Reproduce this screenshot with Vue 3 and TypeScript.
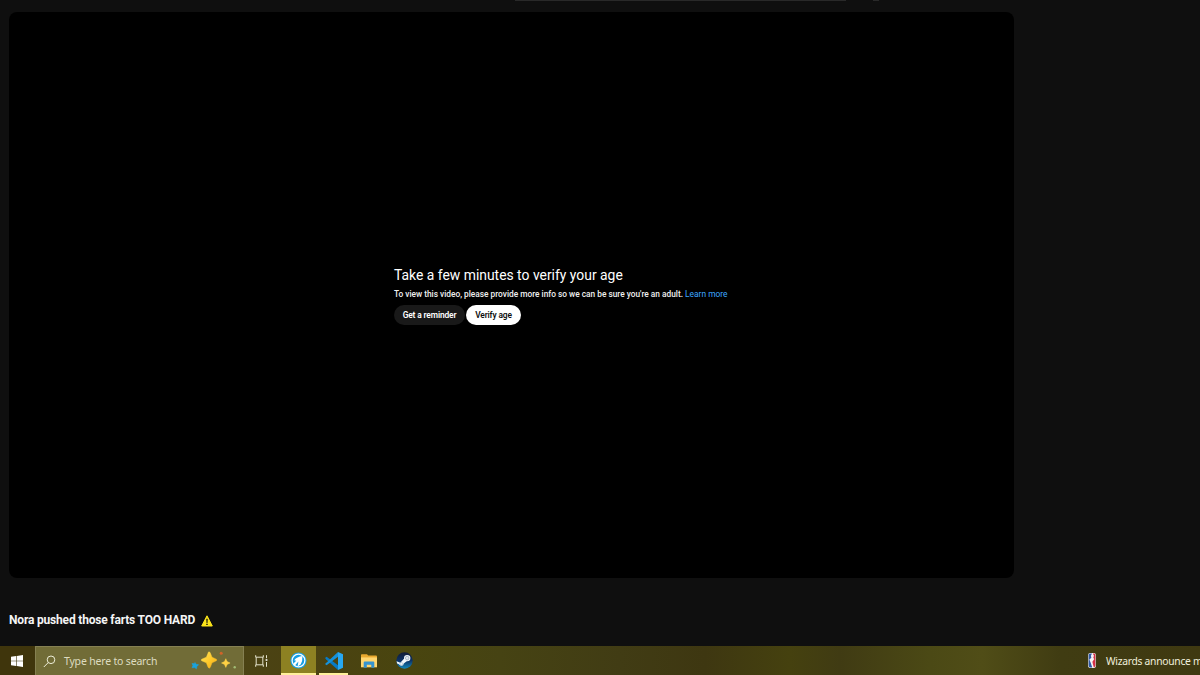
<script setup lang="ts">
const prompt = {
  title: 'Take a few minutes to verify your age',
  body: "To view this video, please provide more info so we can be sure you're an adult.",
}
const videoTitle = 'Nora pushed those farts TOO HARD'
</script>

<template>
  <div class="screen">
    <main class="page">
      <div class="masthead"><i class="search-edge"></i><i class="mic-edge"></i></div>
      <section class="player">
        <div class="prompt">
          <h1>{{ prompt.title }}</h1>
          <p>{{ prompt.body }} <a>Learn more</a></p>
          <div class="actions">
            <button class="dark">Get a reminder</button>
            <button class="light">Verify age</button>
          </div>
        </div>
      </section>
      <h2>
        <span>{{ videoTitle }}</span>
        <svg width="12" height="12" viewBox="0 0 12 12">
          <path d="M6 .8 11.3 11H.7Z" fill="#fde51b" stroke="#fde51b" stroke-width="1" stroke-linejoin="round" />
          <path d="M5.2 3.7h1.6L6.5 8h-1zM5.2 8.7h1.6v1.4H5.2z" fill="#25220b" />
        </svg>
      </h2>
    </main>
    <footer class="taskbar">
      <div class="start">
        <svg width="12" height="12" viewBox="0 0 12 12" fill="#fff">
          <path d="M0 1.7 5.2 1v4.7H0zM5.8.9 12 0v5.7H5.8zM0 6.3h5.2V11L0 10.3zM5.8 6.3H12V12l-6.2-.9z" />
        </svg>
      </div>
      <div class="search">
        <svg class="lens" width="13" height="13" viewBox="0 0 13 13" fill="none" stroke="#eeeed8" stroke-width="1">
          <circle cx="8" cy="4.8" r="3.8" /><path d="M5.3 7.5.8 12" />
        </svg>
        <span>Type here to search</span>
        <svg class="sparkles" width="48" height="22" viewBox="0 0 48 22">
          <defs>
            <linearGradient id="gold" x1="0" y1="0" x2="1" y2="1">
              <stop offset="0" stop-color="#ffe35c" /><stop offset=".55" stop-color="#ffc928" /><stop offset="1" stop-color="#f0a51a" />
            </linearGradient>
          </defs>
          <path d="M18.5 2Q19.5 1.4 20.3 3L22 7.2 26.3 9.2Q27.4 10 26.3 10.8L22 12.8 20.3 17.3Q19.2 19 18.1 17.3L16.4 12.8 11.7 10.8Q10.5 10 11.7 9.2L16.4 7.2Z" fill="url(#gold)" stroke="url(#gold)" stroke-width=".5" />
          <path d="m35.8 8.7 1.3 2.9 3 1.4-3 1.4-1.3 3-1.3-3-3-1.4 3-1.4z" fill="#ffd044" stroke="#ffd044" stroke-width=".5" />
          <path d="m5 12.5 1.1 1.8 2.5.4-1.7 1.7-.4 2.4-2-1.2-2.5.1.9-2.3-.9-1.9 2.2.2z" fill="#1aa2dc" stroke="#1aa2dc" stroke-width=".6" />
          <circle cx="31.2" cy="3.3" r="1.5" fill="#d26329" />
          <circle cx="44.7" cy="17.3" r="1.2" fill="#a2bd75" />
        </svg>
      </div>
      <div class="task">
        <svg width="13" height="12" viewBox="0 0 13 12" fill="none" stroke="#e4e3cc" stroke-width="1">
          <path d="M.7.2v2h7.6v-2M.7 11.8v-2h7.6v2M1.2 2.2v7.6M7.8 2.2v7.6M11.5.2v3M11.5 7v4.8" /><path d="M10.6 4.2h1.8v1.6h-1.8z" fill="#fff" stroke="none" />
        </svg>
      </div>
      <div class="task active">
        <svg width="17" height="17" viewBox="0 0 17 17">
          <circle cx="8.5" cy="8.5" r="8.1" fill="#159ee5" /><circle cx="8.5" cy="8.5" r="6.4" fill="#159ee5" stroke="#f7fcff" stroke-width="1.3" />
          <path d="M4.2 8.2Q7 4.7 12.4 4 12.8 9 10.6 12.5L7.6 14.5 8.4 9.6 4.7 13.7 3.5 11.5 6.2 8.7Z" fill="#fff" />
        </svg>
      </div>
      <div class="task open">
        <svg width="18" height="18" viewBox="0 0 18 18">
          <path d="M13 0 18 2.3v13.4L13 18Z" fill="#27a8f2" />
          <path d="M0 6 1.6 4.7 13 13.2V18L1.2 7.4Z" fill="#087bc5" />
          <path d="M0 12 13 0v4.8L1.6 13.3Z" fill="#1591da" />
        </svg>
      </div>
      <div class="task">
        <svg width="16" height="14" viewBox="0 0 16 14">
          <path d="M0 1Q0 .3.8.3H6l1.2 1.3H15q1 0 1 1V13H0Z" fill="#e9a92f" />
          <path d="M0 3.4h16v9.9H0z" fill="#ffd66f" /><path d="M2.7 13.8V8.5q0-1 1-1h8.6q1 0 1 1v5.3h-3v-3H5.8v3Z" fill="#3594d0" />
        </svg>
      </div>
      <div class="task">
        <svg width="17" height="17" viewBox="0 0 17 17">
          <defs><linearGradient id="steam" x1="0" y1="0" x2="0" y2="1"><stop offset="0" stop-color="#111a35" /><stop offset=".5" stop-color="#0d3266" /><stop offset="1" stop-color="#148abb" /></linearGradient></defs>
          <circle cx="8.5" cy="8.5" r="8.2" fill="url(#steam)" />
          <path d="M.6 9.3 4.3 10.8 8.2 6.4 11 9.1 7.8 11.4Q7.5 14 5.2 13.8 3.6 13.7 3 12.3L1.1 11.4Z" fill="#f3f7fb" />
          <circle cx="11.2" cy="6.1" r="3.2" fill="#f3f7fb" /><circle cx="11.2" cy="6.1" r="1.8" fill="#dce5ee" stroke="#8796a9" stroke-width=".6" />
          <circle cx="5.3" cy="11.8" r="1.4" fill="none" stroke="#9baebf" stroke-width=".5" />
        </svg>
      </div>
      <div class="news">
        <svg width="8" height="15" viewBox="0 0 8 16">
          <rect width="8" height="16" rx="1.8" fill="#f7f3f4" />
          <path d="M.5 2Q.5.5 2 .5h2L2.8 3l.5 2L1.2 7l1.3 3 1.8 5.5H2Q.5 15.5.5 13Z" fill="#315ba7" />
          <path d="M4.8.5H6Q7.5.5 7.5 2v11q0 2-1.5 2.5L5 12 4.4 9.2 6.3 6.6 5.4 4.8l.7-2Z" fill="#d52f48" />
        </svg>
        <span>Wizards announce m</span>
      </div>
    </footer>
  </div>
</template>

<style>
body { margin: 0; overflow: hidden; background: #0f0f0f; }
</style>

<style scoped>
* { box-sizing: border-box; }
.screen { width: 1200px; height: 675px; display: flex; flex-direction: column; overflow: hidden; background: #0f0f0f; color: #fff; font-family: Roboto, sans-serif; }
.page { height: 646px; padding-left: 9px; }
.masthead { height: 12px; display: flex; padding-left: 506px; }
.masthead i { height: 1px; background: #292929; }
.search-edge { width: 331px; }
.mic-edge { width: 6px; margin-left: 27px; }
.player { width: 1005px; height: 566px; padding: 253px 0 0 385px; border-radius: 8px; background: #000; }
h1 { margin: 0; height: 20px; font-size: 13.9px; line-height: 20px; font-weight: 400; white-space: nowrap; }
p { margin: 2px 0 0; height: 14px; font-size: 8.32px; font-weight: 500; line-height: 14px; white-space: nowrap; color: #f0f0f0; }
a { color: #3ea6ff; font-size: 8.4px; font-weight: 400; }
.actions { display: flex; gap: 1px; margin-top: 4px; }
button { height: 20px; padding: 0; border: 0; border-radius: 10px; font: 600 8.4px/20px Roboto, sans-serif; letter-spacing: -.13px; white-space: nowrap; }
.dark { width: 71px; background: #191919; color: #fff; }
.light { width: 55px; background: #fff; color: #0f0f0f; }
h2 { display: flex; align-items: center; gap: 6px; height: 18px; margin: 33px 0 0; font-size: 12px; letter-spacing: -.18px; line-height: 18px; font-weight: 700; white-space: nowrap; color: #f5f5f5; }
h2 svg { margin-top: 1px; }
.taskbar { height: 29px; display: flex; background: linear-gradient(90deg, #40370f 0, #4b4314 240px, #4b4212 300px, #49450f 410px, #464313 500px, #413c14 620px, #3e3711 705px, #45410f 790px, #403b13 840px, #4b4915 930px, #504d17 982px, #403c12 1060px, #3f3911 1200px); font-family: "Noto Sans", sans-serif; }
.start { width: 35px; display: flex; align-items: center; justify-content: center; padding-right: 1px; background: #3f350c; }
.search { width: 209px; display: flex; align-items: center; padding-left: 7px; background: #716c37; border: 1px solid #858052; border-bottom: 0; color: #dedcc0; font-size: 10.5px; letter-spacing: -.18px; }
.search span { width: 95px; margin-left: 8px; white-space: nowrap; }
.sparkles { margin-left: 31px; }
.task { width: 36px; display: flex; align-items: center; justify-content: center; padding-right: 2px; }
.search + .task { width: 37px; padding-right: 3px; }
.task + .task:nth-last-child(2) { padding-right: 4px; }
.task.active { width: 35px; background: #8d8122; border-bottom: 2px solid #fff09b; padding: 2px 1px 0 0; }
.task.open { position: relative; padding-right: 0; }
.open::after { content: ""; position: absolute; left: 3px; right: 4px; bottom: 0; height: 2px; background: #fff09b; }
.news { margin-left: auto; width: 113px; display: flex; align-items: center; gap: 10px; white-space: nowrap; color: #f0efdc; font-size: 10.3px; letter-spacing: -.28px; }
.news svg { flex: none; margin-left: 1px; }
</style>
